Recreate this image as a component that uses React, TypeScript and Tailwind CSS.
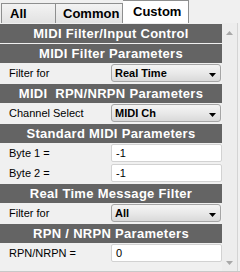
import React from "react";

function Header({ text }: { text: string }) {
  return (
    <div className="pt-[1px] h-[20px]">
      <div className="h-[19px] bg-[#646464] text-white font-bold text-[13px] leading-[19px] text-center tracking-[0.3px] whitespace-pre">
        {text}
      </div>
    </div>
  );
}

function Dropdown({ value }: { value: string }) {
  return (
    <div className="w-[110px] h-[18px] rounded-[3px] border border-[#a5a5a5] bg-gradient-to-b from-[#f4f4f4] via-[#e9e9e9] to-[#d9d9d9] flex items-center pl-[3px] pr-[3px] justify-between">
      <span className="font-bold text-[11px] leading-[14px] text-black">{value}</span>
      <svg width="7" height="4" viewBox="0 0 7 4" className="mt-[3px] mr-[1px]">
        <polygon points="0,0 7,0 3.5,4" fill="#000" />
      </svg>
    </div>
  );
}

function Input({ value }: { value: string }) {
  return (
    <div className="w-[111px] h-[18px] rounded-[2px] border border-[#d2d2d2] bg-white flex items-center pl-[4px]">
      <span className="text-[11px] leading-[14px] text-black">{value}</span>
    </div>
  );
}

function Row({ label, children }: { label: string; children: React.ReactNode }) {
  return (
    <div className="h-[20px] flex items-center">
      <div className="w-[111px] pl-[9px] text-[11px] leading-[14px] text-black">{label}</div>
      {children}
    </div>
  );
}

export default function App() {
  return (
    <div className="w-[240px] h-[272px] bg-[#f0f0f0] overflow-hidden font-['Liberation_Sans',Arial,sans-serif] flex flex-col">
      <div className="h-[23px] flex items-end">
        <div className="ml-[1px] w-[55px] h-[20px] border-l border-t border-r border-[#8e8f8f] bg-gradient-to-b from-[#f3f3f3] to-[#e2e2e2] pl-[8px] text-[13px] font-bold leading-[19px] text-black">
          All
        </div>
        <div className="w-[67px] h-[20px] border-t border-r border-[#8e8f8f] bg-gradient-to-b from-[#f3f3f3] to-[#e2e2e2] pl-[7px] text-[13px] font-bold leading-[19px] text-black">
          Common
        </div>
        <div className="w-[66px] h-[23px] border-t border-r border-[#8e8f8f] bg-white pl-[10px] text-[13px] font-bold leading-[22px] text-black">
          Custom
        </div>
      </div>
      <div className="flex flex-1 border-b border-[#c8c8c8]">
        <div className="w-[222px] flex flex-col">
          <Header text="MIDI Filter/Input Control" />
          <Header text="MIDI Filter Parameters" />
          <Row label="Filter for">
            <Dropdown value="Real Time" />
          </Row>
          <Header text="MIDI  RPN/NRPN Parameters" />
          <Row label="Channel Select">
            <Dropdown value="MIDI Ch" />
          </Row>
          <Header text="Standard MIDI Parameters" />
          <Row label="Byte 1 =">
            <Input value="-1" />
          </Row>
          <Row label="Byte 2 =">
            <Input value="-1" />
          </Row>
          <Header text="Real Time Message Filter" />
          <Row label="Filter for">
            <Dropdown value="All" />
          </Row>
          <Header text="RPN / NRPN Parameters" />
          <Row label="RPN/NRPN =">
            <Input value="0" />
          </Row>
        </div>
        <div className="w-[15px] bg-[#ededed] flex flex-col items-center justify-between pt-[8px] pb-[6px]">
          <svg width="7" height="4" viewBox="0 0 7 4">
            <polygon points="3.5,0 7,4 0,4" fill="#a8a8a8" />
          </svg>
          <svg width="7" height="4" viewBox="0 0 7 4">
            <polygon points="0,0 7,0 3.5,4" fill="#a8a8a8" />
          </svg>
        </div>
        <div className="w-[1px] bg-[#d4d4d4]" />
        <div className="w-[2px]" />
      </div>
    </div>
  );
}
